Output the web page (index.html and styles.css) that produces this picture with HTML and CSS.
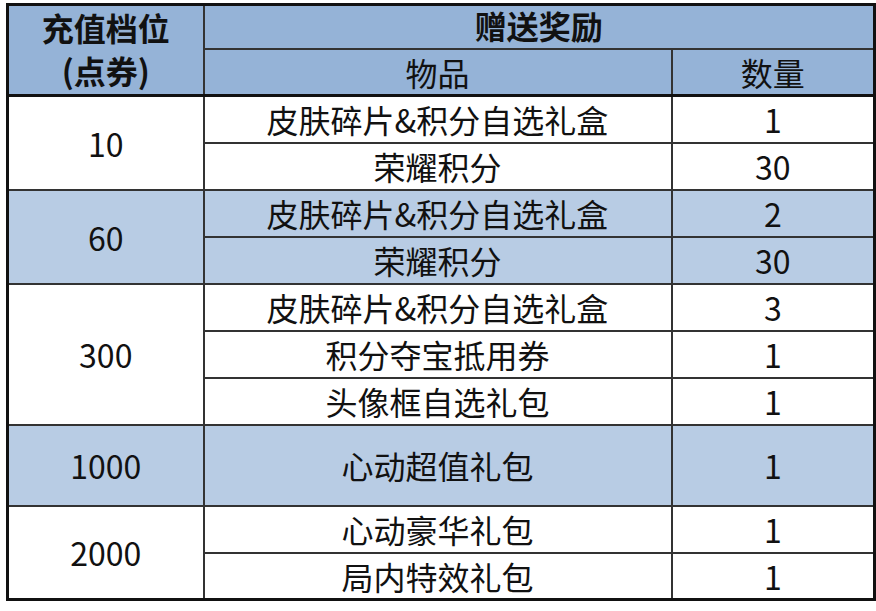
FILE: index.html
```html
<!DOCTYPE html>
<html lang="zh-CN">
<head>
<meta charset="utf-8">
<title>充值档位</title>
<link rel="stylesheet" href="styles.css">
</head>
<body>
<table class="tbl">
  <colgroup>
    <col class="c1">
    <col class="c2">
    <col class="c3">
  </colgroup>
  <thead>
    <tr class="h1">
      <th rowspan="2" class="tier-head">充值档位<br>(点券)</th>
      <th colspan="2" class="top-head">赠送奖励</th>
    </tr>
    <tr class="h2">
      <th class="sub">物品</th>
      <th class="sub">数量</th>
    </tr>
  </thead>
  <tbody class="grp">
    <tr><td rowspan="2">10</td><td>皮肤碎片&amp;积分自选礼盒</td><td>1</td></tr>
    <tr><td>荣耀积分</td><td>30</td></tr>
  </tbody>
  <tbody class="grp alt">
    <tr><td rowspan="2">60</td><td>皮肤碎片&amp;积分自选礼盒</td><td>2</td></tr>
    <tr><td>荣耀积分</td><td>30</td></tr>
  </tbody>
  <tbody class="grp">
    <tr><td rowspan="3">300</td><td>皮肤碎片&amp;积分自选礼盒</td><td>3</td></tr>
    <tr><td>积分夺宝抵用券</td><td>1</td></tr>
    <tr><td>头像框自选礼包</td><td>1</td></tr>
  </tbody>
  <tbody class="grp alt">
    <tr class="tall"><td>1000</td><td>心动超值礼包</td><td>1</td></tr>
  </tbody>
  <tbody class="grp">
    <tr><td rowspan="2">2000</td><td>心动豪华礼包</td><td>1</td></tr>
    <tr><td>局内特效礼包</td><td>1</td></tr>
  </tbody>
</table>
</body>
</html>
```
FILE: styles.css
```css
html, body {
  margin: 0;
  padding: 0;
  background: #ffffff;
}

body {
  padding: 3px 0 0 6px;
  font-family: "Noto Sans CJK SC", "Noto Sans", sans-serif;
  color: #111111;
}

.tbl {
  border-collapse: collapse;
  table-layout: fixed;
  width: 867px;
  border: 3px solid #111111;
}

.c1 { width: 196px; }
.c2 { width: 468px; }
.c3 { width: 203px; }

.tbl th,
.tbl td {
  border: 2px solid #333333;
  padding: 0;
  text-align: center;
  vertical-align: middle;
  font-size: 32px;
  line-height: 1;
  white-space: nowrap;
}

.tbl th {
  background: #95b3d7;
  font-weight: 700;
  font-size: 32px;
}

.tbl th.sub {
  font-weight: 400;
  font-size: 32px;
}

.tbl th.tier-head {
  line-height: 43px;
  padding-bottom: 2px;
}

.tbl th.top-head {
  padding-bottom: 4px;
}

.h1 { height: 44px; }
.h2 { height: 45px; }

thead tr:last-child th,
thead .tier-head {
  border-bottom: 3px solid #111111;
}

.grp tr { height: 47px; }
.grp tr.tall { height: 81px; }

.alt td {
  background: #b8cce4;
}

.grp {
  border-top: 2px solid #222222;
}
```
